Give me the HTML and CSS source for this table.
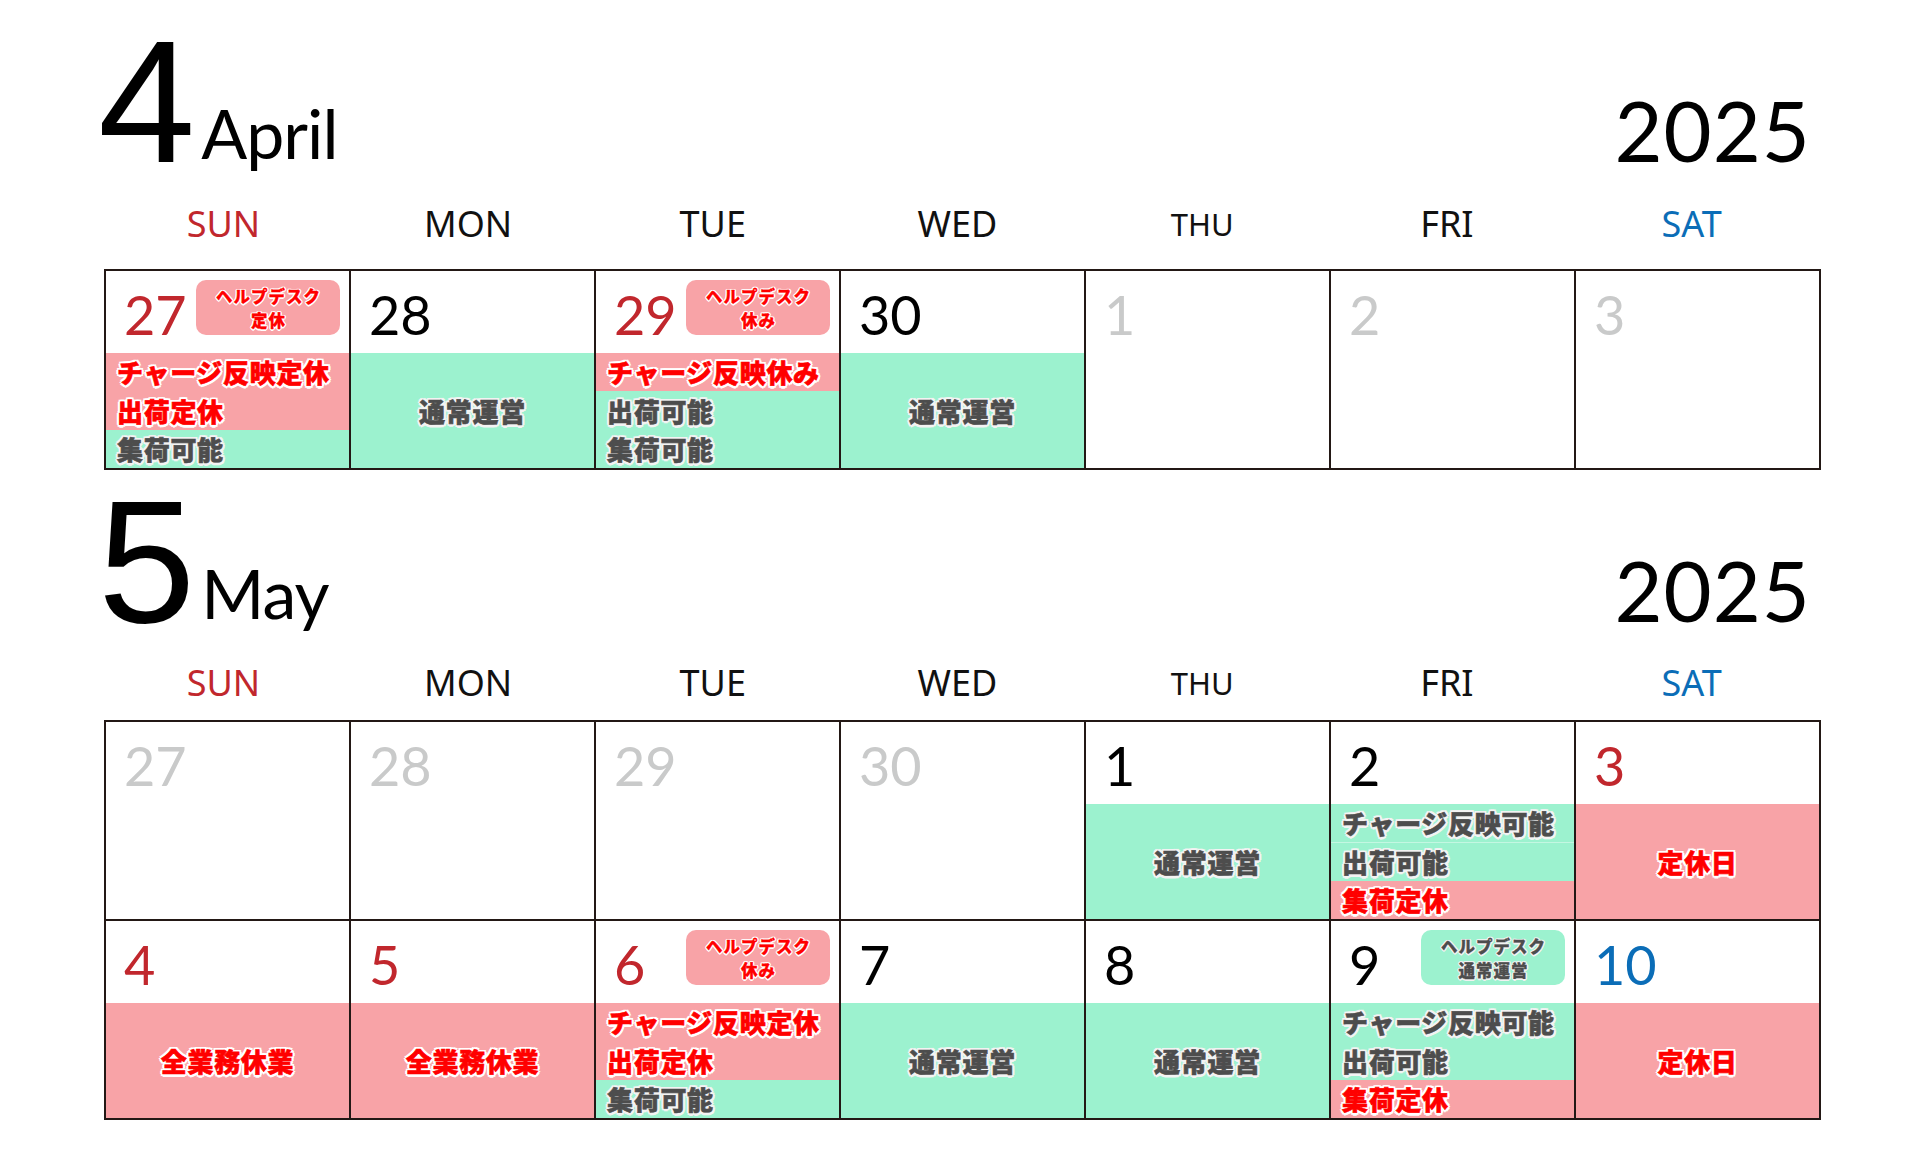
FILE: index.html
```html
<!DOCTYPE html>
<html lang="ja">
<head>
<meta charset="utf-8">
<title>2025 April / May</title>
<link rel="stylesheet" href="styles.css">
</head>
<body>
<main class="page">

<section class="month april">
  <header class="month-head">
    <div class="title"><span class="num">4</span><span class="name">April</span></div>
    <span class="year">2025</span>
  </header>
  <div class="weekdays">
    <span class="wd sun">SUN</span><span class="wd">MON</span><span class="wd">TUE</span><span class="wd">WED</span><span class="wd thu">THU</span><span class="wd">FRI</span><span class="wd sat">SAT</span>
  </div>
  <div class="grid">
    <div class="cell">
      <div class="date-row"><span class="d red-d">27</span><span class="badge pink"><span class="bl red">ヘルプデスク</span><span class="bl red">定休</span></span></div>
      <div class="band">
        <div class="seg pink n2"><span class="t red">チャージ反映定休</span><span class="t red">出荷定休</span></div>
        <div class="seg green n1"><span class="t gray">集荷可能</span></div>
      </div>
    </div>
    <div class="cell">
      <div class="date-row"><span class="d">28</span></div>
      <div class="band"><div class="seg green full"><span class="t gray">通常運営</span></div></div>
    </div>
    <div class="cell">
      <div class="date-row"><span class="d red-d">29</span><span class="badge pink"><span class="bl red">ヘルプデスク</span><span class="bl red">休み</span></span></div>
      <div class="band">
        <div class="seg pink n1"><span class="t red">チャージ反映休み</span></div>
        <div class="seg green n2"><span class="t gray">出荷可能</span><span class="t gray">集荷可能</span></div>
      </div>
    </div>
    <div class="cell">
      <div class="date-row"><span class="d">30</span></div>
      <div class="band"><div class="seg green full"><span class="t gray">通常運営</span></div></div>
    </div>
    <div class="cell">
      <div class="date-row"><span class="d muted">1</span></div>
      <div class="band"></div>
    </div>
    <div class="cell">
      <div class="date-row"><span class="d muted">2</span></div>
      <div class="band"></div>
    </div>
    <div class="cell">
      <div class="date-row"><span class="d muted">3</span></div>
      <div class="band"></div>
    </div>
  </div>
</section>

<section class="month may">
  <header class="month-head">
    <div class="title"><span class="num">5</span><span class="name">May</span></div>
    <span class="year">2025</span>
  </header>
  <div class="weekdays">
    <span class="wd sun">SUN</span><span class="wd">MON</span><span class="wd">TUE</span><span class="wd">WED</span><span class="wd thu">THU</span><span class="wd">FRI</span><span class="wd sat">SAT</span>
  </div>
  <div class="grid">
    <div class="cell"><div class="date-row"><span class="d muted">27</span></div><div class="band"></div></div>
    <div class="cell"><div class="date-row"><span class="d muted">28</span></div><div class="band"></div></div>
    <div class="cell"><div class="date-row"><span class="d muted">29</span></div><div class="band"></div></div>
    <div class="cell"><div class="date-row"><span class="d muted">30</span></div><div class="band"></div></div>
    <div class="cell">
      <div class="date-row"><span class="d">1</span></div>
      <div class="band"><div class="seg green full"><span class="t gray">通常運営</span></div></div>
    </div>
    <div class="cell">
      <div class="date-row"><span class="d">2</span></div>
      <div class="band">
        <div class="seg green n1"><span class="t gray">チャージ反映可能</span></div>
        <div class="seg green n1 sep"><span class="t gray">出荷可能</span></div>
        <div class="seg pink n1"><span class="t red">集荷定休</span></div>
      </div>
    </div>
    <div class="cell">
      <div class="date-row"><span class="d red-d">3</span></div>
      <div class="band"><div class="seg pink full"><span class="t red">定休日</span></div></div>
    </div>

    <div class="cell">
      <div class="date-row"><span class="d red-d">4</span></div>
      <div class="band"><div class="seg pink full"><span class="t red">全業務休業</span></div></div>
    </div>
    <div class="cell">
      <div class="date-row"><span class="d red-d">5</span></div>
      <div class="band"><div class="seg pink full"><span class="t red">全業務休業</span></div></div>
    </div>
    <div class="cell">
      <div class="date-row"><span class="d red-d">6</span><span class="badge pink"><span class="bl red">ヘルプデスク</span><span class="bl red">休み</span></span></div>
      <div class="band">
        <div class="seg pink n2"><span class="t red">チャージ反映定休</span><span class="t red">出荷定休</span></div>
        <div class="seg green n1"><span class="t gray">集荷可能</span></div>
      </div>
    </div>
    <div class="cell">
      <div class="date-row"><span class="d">7</span></div>
      <div class="band"><div class="seg green full"><span class="t gray">通常運営</span></div></div>
    </div>
    <div class="cell">
      <div class="date-row"><span class="d">8</span></div>
      <div class="band"><div class="seg green full"><span class="t gray">通常運営</span></div></div>
    </div>
    <div class="cell">
      <div class="date-row"><span class="d">9</span><span class="badge green"><span class="bl gray">ヘルプデスク</span><span class="bl gray">通常運営</span></span></div>
      <div class="band">
        <div class="seg green n2"><span class="t gray">チャージ反映可能</span><span class="t gray">出荷可能</span></div>
        <div class="seg pink n1"><span class="t red">集荷定休</span></div>
      </div>
    </div>
    <div class="cell">
      <div class="date-row"><span class="d blue-d">10</span></div>
      <div class="band"><div class="seg pink full"><span class="t red">定休日</span></div></div>
    </div>
  </div>
</section>

</main>
</body>
</html>
```

FILE: styles.css
```css
html, body {
  margin: 0;
  padding: 0;
  background: #fff;
}

body {
  font-family: "Lato", "Noto Sans", sans-serif;
  color: #000;
}

.page {
  width: 1920px;
  height: 1155px;
  overflow: hidden;
}

.month {
  width: 1717px;
  margin-left: 104px;
}

.month-head {
  display: flex;
  justify-content: space-between;
  align-items: baseline;
  padding-right: 10px;
}

.april .month-head { padding-top: 14px; }
.may { margin-top: 4px; }

.title {
  white-space: nowrap;
}

.num {
  font-family: "Liberation Sans", "Lato", sans-serif;
  font-weight: 400;
  font-size: 175px;
  line-height: 175px;
  margin-left: -6px;
}

.name {
  font-family: "Lato", sans-serif;
  font-size: 68px;
  letter-spacing: -1px;
  margin-left: 6px;
  vertical-align: 3px;
}

.year {
  font-family: "Lato", sans-serif;
  font-size: 83px;
  letter-spacing: 1px;
}

.weekdays {
  display: grid;
  grid-template-columns: repeat(7, 1fr);
  padding: 0 2px;
}

.april .weekdays { margin-top: 15px; }
.may .weekdays { margin-top: 14px; }

.wd {
  font-family: "Noto Sans", sans-serif;
  font-size: 36px;
  line-height: 40px;
  text-align: center;
  padding-right: 10px;
  color: #111;
}

.wd.thu { font-size: 31px; }
.wd.sun { color: #c1272d; }
.wd.sat { color: #0b6db7; }

.grid {
  display: grid;
  grid-template-columns: repeat(7, 1fr);
  gap: 2px;
  background: #231815;
  border: 2px solid #231815;
}

.april .grid { margin-top: 25px; }
.may .grid { margin-top: 17px; }

.cell {
  background: #fff;
  height: 197px;
  display: flex;
  flex-direction: column;
}

.date-row {
  height: 82px;
  display: flex;
  justify-content: space-between;
  align-items: flex-start;
  padding: 0 9px 0 18px;
  box-sizing: border-box;
}

.d {
  font-family: "Lato", sans-serif;
  font-size: 54px;
  line-height: 54px;
  padding-top: 17px;
  color: #000;
}

.d.red-d { color: #c1272d; }
.d.blue-d { color: #0b6db7; }
.d.muted { color: #c9caca; }

.badge {
  width: 144px;
  height: 55px;
  margin-top: 9px;
  border-radius: 10px;
  display: flex;
  flex-direction: column;
  align-items: center;
  justify-content: center;
  font-family: "Noto Sans CJK JP", sans-serif;
  font-weight: 900;
  font-size: 16.5px;
  line-height: 24px;
  letter-spacing: 1px;
}

.badge.pink { background: #f8a3a7; }
.badge.green { background: #9cf2cf; }

.bl { margin-right: -1px; }

.bl.red {
  color: #ff0000;
  -webkit-text-stroke: 0.3px #ff0000;
  text-shadow: 1.5px 0 #fff, -1.5px 0 #fff, 0 1.5px #fff, 0 -1.5px #fff, 1px 1px #fff, -1px 1px #fff, 1px -1px #fff, -1px -1px #fff;
}

.bl.gray {
  color: #4d4d4d;
  -webkit-text-stroke: 0.3px #4d4d4d;
  text-shadow: 1.5px 0 #f2f2f2, -1.5px 0 #f2f2f2, 0 1.5px #f2f2f2, 0 -1.5px #f2f2f2, 1px 1px #f2f2f2, -1px 1px #f2f2f2, 1px -1px #f2f2f2, -1px -1px #f2f2f2;
}

.band {
  height: 115px;
  display: flex;
  flex-direction: column;
}

.seg {
  display: flex;
  flex-direction: column;
  min-height: 0;
}

.seg.n1 { flex: 1; }
.seg.n2 { flex: 2; }
.seg.full {
  flex: 1;
  align-items: center;
  justify-content: center;
}

.seg.pink { background: #f8a3a7; }
.seg.green { background: #9cf2cf; }
.seg.sep { border-top: 1px solid #c4f7e2; }

.t {
  flex: 1;
  display: flex;
  align-items: center;
  padding-left: 11px;
  font-family: "Noto Sans CJK JP", sans-serif;
  font-weight: 900;
  font-size: 26px;
  line-height: 30px;
  letter-spacing: 0.7px;
  white-space: nowrap;
}

.seg.full .t {
  flex: none;
  padding-left: 0;
}

.t.red {
  color: #ff0000;
  -webkit-text-stroke: 0.6px #ff0000;
  text-shadow: 2.5px 0 #fff, -2.5px 0 #fff, 0 2.5px #fff, 0 -2.5px #fff, 1.8px 1.8px #fff, -1.8px 1.8px #fff, 1.8px -1.8px #fff, -1.8px -1.8px #fff;
}

.t.gray {
  color: #4d4d4d;
  -webkit-text-stroke: 0.6px #4d4d4d;
  text-shadow: 2.5px 0 #f3f3f3, -2.5px 0 #f3f3f3, 0 2.5px #f3f3f3, 0 -2.5px #f3f3f3, 1.8px 1.8px #f3f3f3, -1.8px 1.8px #f3f3f3, 1.8px -1.8px #f3f3f3, -1.8px -1.8px #f3f3f3;
}
```
